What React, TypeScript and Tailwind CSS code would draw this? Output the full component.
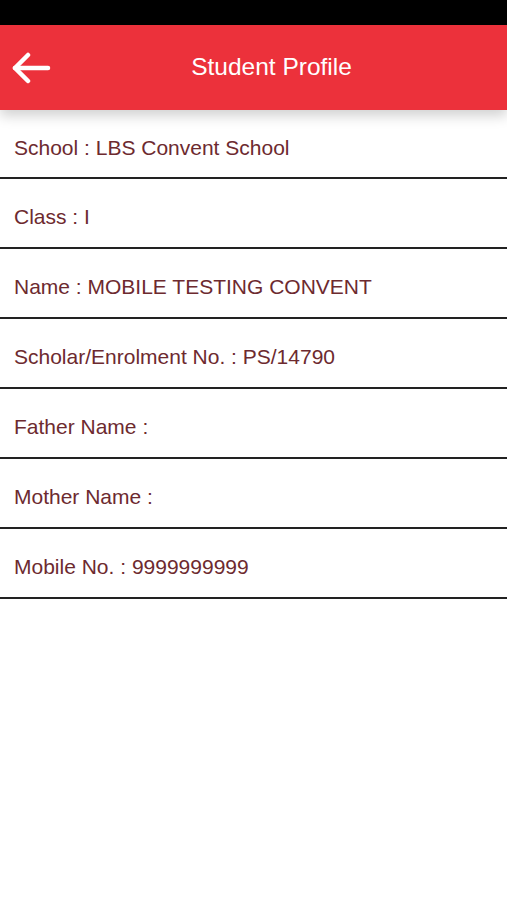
const rows = [
  'School : LBS Convent School',
  'Class : I',
  'Name : MOBILE TESTING CONVENT',
  'Scholar/Enrolment No. : PS/14790',
  'Father Name :',
  'Mother Name :',
  'Mobile No. : 9999999999',
];

export default function App() {
  return (
    <div className="w-[507px] h-[900px] bg-white font-['Liberation_Sans',sans-serif]">
      <div className="h-[25px] bg-black" />
      <div className="relative z-10 h-[85px] bg-[#ec313b] flex items-center shadow-[0_6px_12px_rgba(0,0,0,0.18)]">
        <div className="w-[64px] pl-[12px] flex items-center">
          <svg width="40" height="32" viewBox="0 0 40 32" fill="none" stroke="white" strokeWidth="4.5" strokeLinecap="round" strokeLinejoin="round">
            <path d="M3 16H36" />
            <path d="M16 3L3 16L16 29" />
          </svg>
        </div>
        <h1 className="flex-1 text-center pr-[28px] text-white text-[24.5px] leading-none">Student Profile</h1>
      </div>
      <div>
        {rows.map((r, i) => (
          <div key={i} className="h-[70px] border-b-2 border-[#222] flex items-center pl-[14px] pt-[8px] first:h-[69px] first:pt-[8px]">
            <span className="text-[#6d2a2f] text-[21px]">{r}</span>
          </div>
        ))}
      </div>
    </div>
  );
}
